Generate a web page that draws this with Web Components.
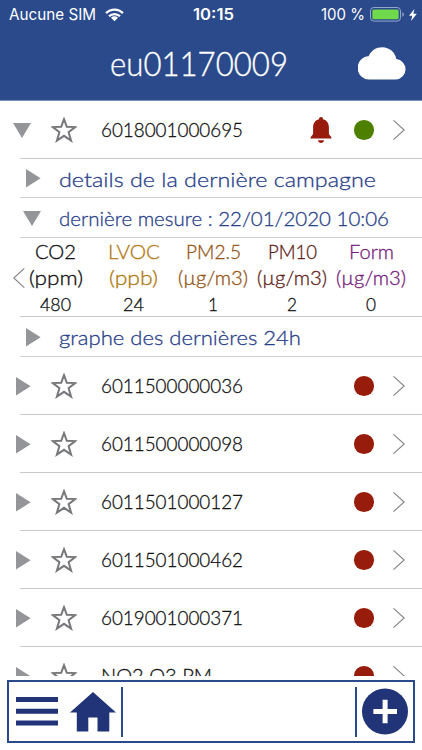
<!DOCTYPE html>
<html lang="fr">
<head>
<meta charset="utf-8">
<title>eu01170009</title>
<style>
html,body{margin:0;height:100%;background:#fff;overflow:hidden}
body{font-family:Lato,"Noto Sans",sans-serif}
</style>
</head>
<body>
<sensor-app></sensor-app>
<script>
const define=(name,cls)=>customElements.define(name,cls);
class Base extends HTMLElement{
  a(n,d=''){return this.getAttribute(n)??d}
  connectedCallback(){
    if(this.shadowRoot)return;
    this.attachShadow({mode:'open'}).innerHTML=this.render();
  }
}
/* Single line of text set to a given width; "base" is the baseline inside the box. */
define('fit-text',class extends Base{
  render(){
    const w=+this.a('w'),s=this.a('size','20'),h=+this.a('h','24'),b=this.a('base','19.3');
    return `<style>:host{display:block;flex:none;width:${w}px;height:${h}px}svg{display:block;overflow:visible}text{fill:currentColor;stroke:currentColor;stroke-width:${this.a('stroke','.3')};font-size:${s}px;font-weight:${this.a('weight','300')};font-family:inherit}</style>
    <svg width="${w}" height="${h}"><text x="0" y="${b}" textLength="${w}" lengthAdjust="spacingAndGlyphs">${this.a('text')}</text></svg>`;
  }
});
const ICONS={
  down:[18,15,'<path d="M0 0H18L9 15Z" fill="#939598"/>'],
  right:[15,19,'<path d="M0 0L14.6 9.3L0 18.6Z" fill="#939598"/>'],
  star:[26,26,'<path d="M13 2.2L15.8 9.8L24.2 10.1L17.6 15.2L20.1 23.6L13 18.8L5.9 23.6L8.4 15.2L1.8 10.1L10.2 9.8Z" fill="none" stroke="#77787b" stroke-width="2"/>'],
  bell:[22,26,'<path d="M11 0C12.4 0 13 .9 13 2.2C17 3.2 18.9 6.3 18.9 10.2V16.6C18.9 18.2 21.6 19.3 21.6 21.5H.4C.4 19.3 3.1 18.2 3.1 16.6V10.2C3.1 6.3 5 3.2 9 2.2C9 .9 9.6 0 11 0ZM8 23.2H14C13.7 25 12.6 25.9 11 25.9S8.3 25 8 23.2Z" fill="#981c0b"/>'],
  next:[12,20,'<path d="M.5 .4L11.2 10L.5 19.6" fill="none" stroke="#808285" stroke-width="1.1"/>'],
  prev:[12,20,'<path d="M11.3 .4L.8 10L11.3 19.6" fill="none" stroke="#808285" stroke-width="1.1"/>'],
  cloud:[49,33,'<path d="M11.5 32.5A11.4 11.6 0 0 1 10.6 9.2C13 3.5 18.3 .2 24.3 .2C31.4 .2 37.2 5.2 38.3 12A10.4 10.3 0 0 1 38 32.5Z" fill="#fff"/>'],
  wifi:[19,14,'<g fill="none" stroke="#fff" stroke-width="2.3"><path d="M1.1 5.1A11.9 11.9 0 0 1 17.9 5.1M4 8.3A7.8 7.8 0 0 1 15 8.3"/></g><path d="M9.5 13.2L6 9.8A5 5 0 0 1 13 9.8Z" fill="#fff"/>'],
  battery:[35,15,'<rect x=".5" y=".5" width="30" height="13.6" rx="3.4" fill="none" stroke="#92a5cd"/><rect x="2.3" y="2.4" width="26.4" height="9.9" rx="1.5" fill="#6fd84b"/><path d="M32.3 5V9.8C34.4 9 34.4 5.8 32.3 5Z" fill="#92a5cd"/>'],
  bolt:[8,12,'<path d="M5.4 0L0 6.7H3.2L2.1 12L7.8 4.8H4.4Z" fill="#fff"/>'],
  menu:[42,29,'<path d="M0 0H42V5H0ZM0 11.8H42V16.8H0ZM0 23.4H42V28.4H0Z" fill="#213478"/>'],
  home:[46,40,'<path d="M23 0L46 20.5H39.3V39.5H27.5V25.5H18.3V39.5H6.8V20.5H0Z" fill="#213478"/>'],
  plus:[46,47,'<circle cx="23" cy="23.4" r="23" fill="#213478"/><path d="M20.6 11.7H25.6V21H35V26H25.6V35.3H20.6V26H11.4V21H20.6Z" fill="#fff"/>']
};
define('app-icon',class extends Base{
  render(){
    const [w,h,p]=ICONS[this.a('name')];
    return `<style>:host{display:block;flex:none;width:${w}px;height:${h}px}svg{display:block}</style><svg width="${w}" height="${h}" viewBox="0 0 ${w} ${h}">${p}</svg>`;
  }
});
define('app-header',class extends Base{
  render(){return `<style>
  :host{display:block;height:101px;flex:none;background:linear-gradient(#7b90bc,#7b90bc) 0 100%/100% 1px no-repeat #2b4a8b;color:#fff}
  .status{display:grid;grid-template-columns:1fr auto 1fr;height:29px;align-items:center;font-family:Inter,sans-serif;padding:0 5px 0 9px}
  .l,.r{display:flex;align-items:center}.l{gap:9px}.r{justify-content:flex-end;gap:5px}
  .r app-icon:last-child{margin-left:-1px}
  .title{display:grid;grid-template-columns:110px 1fr auto;align-items:start;padding:18px 15px 0 0}
  </style>
  <div class="status"><div class="l"><fit-text text="Aucune SIM" w="87" size="15.5" weight="400" stroke="0" h="18" base="14"></fit-text><app-icon name="wifi"></app-icon></div>
  <fit-text text="10:15" w="41" size="15.5" weight="600" stroke="0" h="18" base="14"></fit-text>
  <div class="r"><fit-text text="100 %" w="44" size="15.5" weight="400" stroke="0" h="18" base="14"></fit-text><app-icon name="battery"></app-icon><app-icon name="bolt"></app-icon></div></div>
  <div class="title"><span></span><fit-text text="eu01170009" w="178" size="32.5" stroke=".35" h="34" base="29.3"></fit-text><app-icon name="cloud"></app-icon></div>`}
});
define('sensor-row',class extends Base{
  render(){
    const open=this.hasAttribute('open');
    return `<style>
  :host{display:flex;flex:none;box-sizing:border-box;height:58px;align-items:center;padding:0 17px 0 ${open?13:16}px;color:#111;background:linear-gradient(#c7c8ca,#c7c8ca) 20px 100%/100% 1px no-repeat}
  app-icon[name=star]{margin-left:${open?19.5:19.5}px}
  fit-text{margin-left:24.5px}
  .end{margin-left:auto;display:flex;align-items:center}
  .dot{width:19.6px;height:19.6px;border-radius:50%;background:${open?'#4d8000':'#981c0b'};margin:0 19px 0 22px}
  </style><app-icon name="${open?'down':'right'}"></app-icon><app-icon name="star"></app-icon><fit-text text="${this.a('label')}" w="${this.a('w','142')}"></fit-text><div class="end">${this.hasAttribute('alert')?'<app-icon name="bell"></app-icon>':''}<span class="dot"></span><app-icon name="next"></app-icon></div>`}
});
define('detail-row',class extends Base{
  render(){
    const open=this.hasAttribute('open');
    return `<style>
  :host{display:flex;flex:none;box-sizing:border-box;height:40px;align-items:center;padding-left:${open?23:26}px;color:#28418a;background:linear-gradient(#d0d1d3,#d0d1d3) 20px 100%/100% 1px no-repeat}
  fit-text{margin-left:17.5px}
  </style><app-icon name="${open?'down':'right'}"></app-icon><fit-text text="${this.a('label')}" w="${this.a('w')}" size="20.5" base="19.7"></fit-text>`}
});
define('measure-cell',class extends Base{
  render(){
    const [a,b,c]=this.a('widths').split(',');
    return `<style>:host{display:flex;flex-direction:column;align-items:center;height:79px;box-sizing:border-box;padding-top:1px}.c{color:${this.a('color')};display:grid;justify-items:center}.v{color:#111}</style>
    <div class="c"><fit-text text="${this.a('label')}" w="${a}" size="19" h="26" base="19.6"></fit-text><fit-text text="${this.a('unit')}" w="${b}" size="19" h="27" base="20.4"></fit-text></div><fit-text class="v" text="${this.a('value')}" w="${c}" size="18.5" h="24" base="19.4"></fit-text>`}
});
define('measure-table',class extends Base{
  render(){return `<style>
  :host{display:grid;flex:none;grid-template-columns:13px 12px 1fr;height:79px;background:linear-gradient(#c7c8ca,#c7c8ca) 20px 100%/100% 1px no-repeat}
  .row{display:grid;grid-template-columns:61px 95px 64px 94px 64px}
  app-icon{align-self:center;margin-top:1px}
  </style><span></span><app-icon name="prev"></app-icon><div class="row">
  <measure-cell label="CO2" unit="(ppm)" value="480" widths="41,54,31" color="#111"></measure-cell>
  <measure-cell label="LVOC" unit="(ppb)" value="24" widths="52,49,21" color="#b17a12"></measure-cell>
  <measure-cell label="PM2.5" unit="(µg/m3)" value="1" widths="55,70,10" color="#945312"></measure-cell>
  <measure-cell label="PM10" unit="(µg/m3)" value="2" widths="49,70,10" color="#5f1d18"></measure-cell>
  <measure-cell label="Form" unit="(µg/m3)" value="0" widths="45,70,10" color="#761c7b"></measure-cell></div>`}
});
define('bottom-bar',class extends Base{
  render(){return `<style>
  :host{display:flex;flex:none;box-sizing:border-box;height:63px;margin:4px 7px 7px;border:2px solid #2b4a8b;align-items:center;padding:0 5px 0 7px;background:#fff}
  .sep{width:2px;height:50px;background:#2b4a8b}
  .l{margin-left:5px}.r{margin-left:auto;margin-right:5px}
  app-icon[name=home]{margin-left:11.5px}
  </style><app-icon name="menu"></app-icon><app-icon name="home"></app-icon><span class="sep l"></span><span class="sep r"></span><app-icon name="plus"></app-icon>`}
});
define('sensor-app',class extends Base{
  render(){return `<style>
  :host{display:flex;flex-direction:column;width:422px;height:750px;overflow:hidden;background:#fff}
  main{flex:1;min-height:0;overflow:hidden;display:flex;flex-direction:column}
  detail-row:nth-of-type(1){height:39px}
  </style><app-header></app-header><main>
  <sensor-row open alert label="6018001000695"></sensor-row>
  <detail-row label="details de la dernière campagne" w="317"></detail-row>
  <detail-row open label="dernière mesure : 22/01/2020 10:06" w="330"></detail-row>
  <measure-table></measure-table>
  <detail-row label="graphe des dernières 24h" w="242"></detail-row>
  <sensor-row label="6011500000036"></sensor-row>
  <sensor-row label="6011500000098"></sensor-row>
  <sensor-row label="6011501000127"></sensor-row>
  <sensor-row label="6011501000462"></sensor-row>
  <sensor-row label="6019001000371"></sensor-row>
  <sensor-row label="NO2 O3 PM" w="111"></sensor-row>
  </main><bottom-bar></bottom-bar>`}
});
</script>
</body>
</html>
